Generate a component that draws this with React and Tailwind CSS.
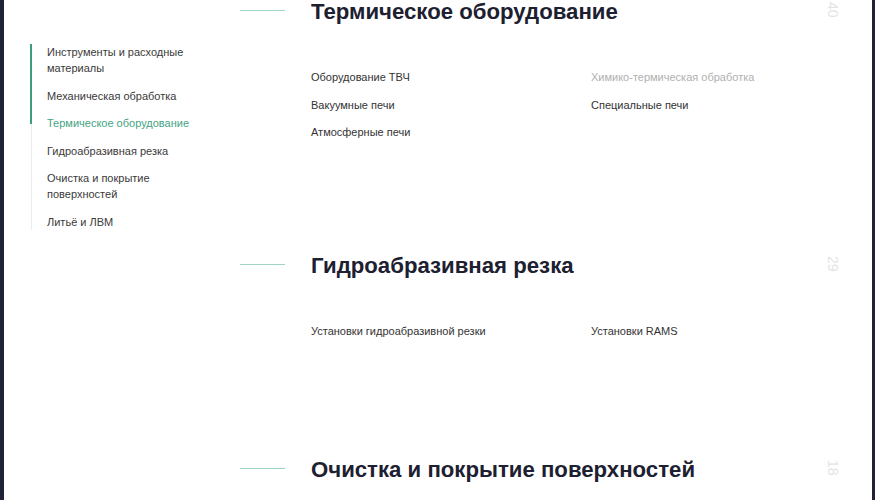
const nav = [
  { label: 'Инструменты и расходные материалы' },
  { label: 'Механическая обработка' },
  { label: 'Термическое оборудование', active: true },
  { label: 'Гидроабразивная резка' },
  { label: 'Очистка и покрытие поверхностей' },
  { label: 'Литьё и ЛВМ' },
]

const sections = [
  {
    title: 'Термическое оборудование',
    count: '40',
    pad: 'pb-[110px]',
    links: [
      { label: 'Оборудование ТВЧ' },
      { label: 'Химико-термическая обработка', muted: true },
      { label: 'Вакуумные печи' },
      { label: 'Специальные печи' },
      { label: 'Атмосферные печи' },
    ],
  },
  {
    title: 'Гидроабразивная резка',
    count: '29',
    pad: 'pb-[115px]',
    links: [{ label: 'Установки гидроабразивной резки' }, { label: 'Установки RAMS' }],
  },
  {
    title: 'Очистка и покрытие поверхностей',
    count: '18',
    pad: 'pb-[110px]',
    links: [],
  },
]

function Sidebar() {
  return (
    <aside className="w-[236px] shrink-0 pl-[27px] pt-[44px]">
      <div className="relative w-[187px] border-l border-[#ececec]">
        <div className="absolute left-[-2px] top-0 h-[80px] w-[2px] bg-[#3c9c7e]" />
        <ul className="flex flex-col gap-[11.5px] pl-[15px] text-[11px] leading-[16px]">
          {nav.map((item) => (
            <li
              key={item.label}
              className={`w-[165px] ${item.active ? 'text-[#45a384]' : 'text-[#3a3a3a]'}`}
            >
              {item.label}
            </li>
          ))}
        </ul>
      </div>
    </aside>
  )
}

function Section({ section }) {
  return (
    <section className={`flex ${section.pad}`}>
      <div className="mt-[12px] h-px w-[45px] shrink-0 bg-[#9fd4c6]" />
      <div className="ml-[26px] w-[515px]">
        <h2 className="text-[22.2px] font-bold leading-[28px] text-[#1d2030]">{section.title}</h2>
        {section.links.length > 0 && (
          <div className="mt-[41px] grid grid-cols-[280px_1fr] gap-y-[7.5px] text-[11px] leading-[20px]">
            {section.links.map((link) => (
              <div key={link.label} className={link.muted ? 'text-[#b0b0b0]' : 'text-[#333333]'}>
                {link.label}
              </div>
            ))}
          </div>
        )}
      </div>
      <div className="pt-[4px] text-[14px] leading-none text-[#e4e4e4] [writing-mode:vertical-rl]">
        {section.count}
      </div>
    </section>
  )
}

export default function App() {
  return (
    <div
      className="flex h-[500px] w-[875px] overflow-hidden bg-[#1f2335] pl-[4px] pr-[3px]"
      style={{ fontFamily: '"Liberation Sans", Arial, sans-serif' }}
    >
      <div className="flex flex-1 items-start bg-white">
        <Sidebar />
        <main className="mt-[-2px] flex-1">
          {sections.map((s) => (
            <Section key={s.title} section={s} />
          ))}
        </main>
      </div>
    </div>
  )
}
